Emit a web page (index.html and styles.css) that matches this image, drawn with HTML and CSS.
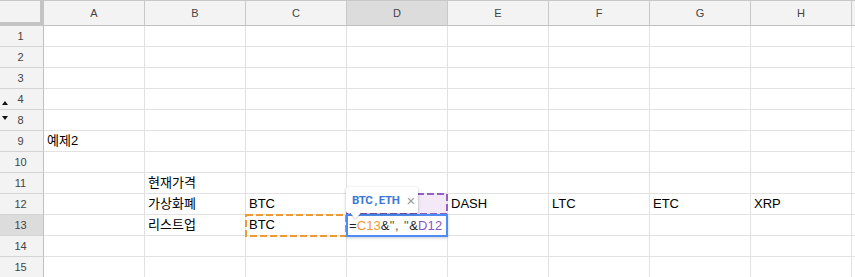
FILE: index.html
```html
<!DOCTYPE html>
<html lang="ko">
<head>
<meta charset="utf-8">
<link rel="stylesheet" href="styles.css">
</head>
<body>
<div class="sheet">
  <div class="row head">
    <div class="corner"></div>
    <div class="ch">A</div><div class="ch">B</div><div class="ch">C</div><div class="ch sel">D</div><div class="ch">E</div><div class="ch">F</div><div class="ch">G</div><div class="ch">H</div><div class="ch"></div>
  </div>
  <div class="row"><div class="rh">1</div><div class="c"></div><div class="c"></div><div class="c"></div><div class="c"></div><div class="c"></div><div class="c"></div><div class="c"></div><div class="c"></div><div class="c"></div></div>
  <div class="row"><div class="rh">2</div><div class="c"></div><div class="c"></div><div class="c"></div><div class="c"></div><div class="c"></div><div class="c"></div><div class="c"></div><div class="c"></div><div class="c"></div></div>
  <div class="row"><div class="rh">3</div><div class="c"></div><div class="c"></div><div class="c"></div><div class="c"></div><div class="c"></div><div class="c"></div><div class="c"></div><div class="c"></div><div class="c"></div></div>
  <div class="row"><div class="rh"><span class="arrow-up"></span>4</div><div class="c"></div><div class="c"></div><div class="c"></div><div class="c"></div><div class="c"></div><div class="c"></div><div class="c"></div><div class="c"></div><div class="c"></div></div>
  <div class="row"><div class="rh"><span class="arrow-down"></span>8</div><div class="c"></div><div class="c"></div><div class="c"></div><div class="c"></div><div class="c"></div><div class="c"></div><div class="c"></div><div class="c"></div><div class="c"></div></div>
  <div class="row"><div class="rh">9</div><div class="c">예제2</div><div class="c"></div><div class="c"></div><div class="c"></div><div class="c"></div><div class="c"></div><div class="c"></div><div class="c"></div><div class="c"></div></div>
  <div class="row"><div class="rh">10</div><div class="c"></div><div class="c"></div><div class="c"></div><div class="c"></div><div class="c"></div><div class="c"></div><div class="c"></div><div class="c"></div><div class="c"></div></div>
  <div class="row"><div class="rh">11</div><div class="c"></div><div class="c">현재가격</div><div class="c"></div><div class="c"></div><div class="c"></div><div class="c"></div><div class="c"></div><div class="c"></div><div class="c"></div></div>
  <div class="row"><div class="rh">12</div><div class="c"></div><div class="c">가상화폐</div><div class="c">BTC</div>
    <div class="c ref">
      <svg class="dash dash-purple" width="102" height="22" viewBox="0 0 102 22"><rect x="1" y="1" width="100" height="20" fill="#f3e9f9" stroke="#9360c4" stroke-width="2" stroke-dasharray="7 3"/></svg>
      <div class="tip"><span class="tip-text">BTC , ETH</span><span class="tip-x">×</span></div>
    </div>
    <div class="c">DASH</div><div class="c">LTC</div><div class="c">ETC</div><div class="c">XRP</div><div class="c"></div></div>
  <div class="row"><div class="rh sel">13</div><div class="c"></div><div class="c">리스트업</div>
    <div class="c ref">
      <svg class="dash dash-orange" width="102" height="23" viewBox="0 0 102 23"><rect x="1" y="1" width="100" height="21" fill="none" stroke="#ee9a33" stroke-width="2" stroke-dasharray="7 3"/></svg>
      <span class="val">BTC</span>
    </div>
    <div class="c ref">
      <div class="editor"><span class="f-op">=</span><span class="f-c13">C13</span><span class="f-op">&amp;</span><span class="f-str">", "</span><span class="f-op">&amp;</span><span class="f-d12">D12</span></div>
    </div>
    <div class="c"></div><div class="c"></div><div class="c"></div><div class="c"></div><div class="c"></div></div>
  <div class="row"><div class="rh">14</div><div class="c"></div><div class="c"></div><div class="c"></div><div class="c"></div><div class="c"></div><div class="c"></div><div class="c"></div><div class="c"></div><div class="c"></div></div>
  <div class="row"><div class="rh">15</div><div class="c"></div><div class="c"></div><div class="c"></div><div class="c"></div><div class="c"></div><div class="c"></div><div class="c"></div><div class="c"></div><div class="c"></div></div>
</div>
</body>
</html>
```
FILE: styles.css
```css
* { box-sizing: border-box; }
html, body { margin: 0; padding: 0; }
body {
  overflow: hidden;
  background: #fff;
  font-family: "Liberation Sans", Arial, "Noto Sans CJK KR", sans-serif;
  color: #000;
}
.sheet { width: 953px; }
.row {
  display: grid;
  grid-template-columns: 44px repeat(9, 101px);
  height: 21px;
}
.row.head { height: 26px; }
.corner {
  background: #f3f3f3;
  border-top: 1px solid #c8c8c8;
  border-right: 4px solid #c4c4c4;
  border-bottom: 4px solid #c4c4c4;
}
.ch {
  background: #f3f3f3;
  border-top: 1px solid #c8c8c8;
  border-right: 1px solid #c8c8c8;
  border-bottom: 1px solid #c0c0c0;
  display: flex;
  align-items: center;
  justify-content: center;
  font-size: 11px;
  color: #444;
}
.ch.sel, .rh.sel { background: #dcdcdc; }
.rh {
  position: relative;
  background: #f3f3f3;
  border-right: 1px solid #c0c0c0;
  border-bottom: 1px solid #d4d4d4;
  display: flex;
  align-items: center;
  justify-content: center;
  font-size: 11px;
  color: #444;
  padding-right: 2px;
}
.c {
  border-right: 1px solid #e2e2e2;
  border-bottom: 1px solid #e2e2e2;
  display: flex;
  align-items: flex-end;
  padding: 0 3px 2px 3px;
  font-size: 13px;
  line-height: 16px;
  white-space: nowrap;
}
.c.ref { position: relative; }
.val { position: relative; z-index: 2; }
.dash { position: absolute; left: -1px; top: -1px; z-index: 1; }
.arrow-up {
  position: absolute;
  left: 2px;
  top: 12px;
  border-left: 3px solid transparent;
  border-right: 3px solid transparent;
  border-bottom: 4px solid #111;
}
.arrow-down {
  position: absolute;
  left: 2px;
  top: 6px;
  border-left: 3px solid transparent;
  border-right: 3px solid transparent;
  border-top: 4px solid #111;
}
.tip {
  position: absolute;
  left: -1px;
  top: -7px;
  width: 72px;
  height: 26px;
  background: #fff;
  border-radius: 2px;
  box-shadow: 0 1px 3px rgba(0,0,0,0.3);
  z-index: 6;
  display: flex;
  align-items: center;
  padding-left: 6px;
  gap: 7px;
}
.tip::after {
  content: "";
  position: absolute;
  left: 6px;
  bottom: -4px;
  width: 7px;
  height: 7px;
  background: #fff;
  transform: rotate(45deg);
  box-shadow: 1px 1px 1px rgba(0,0,0,0.15);
}
.tip-text {
  font-family: Roboto, "Liberation Sans", sans-serif;
  font-weight: 700;
  font-size: 11.5px;
  letter-spacing: -0.4px;
  word-spacing: -0.5px;
  color: #3d78d6;
}
.tip-x {
  font-family: "Liberation Sans", sans-serif;
  font-size: 15px;
  color: #9a9a9a;
  line-height: 1;
}
.editor {
  position: absolute;
  left: -1px;
  top: -1px;
  width: 102px;
  height: 23px;
  border: 2px solid #4d8cf4;
  background: #fff;
  z-index: 4;
  display: flex;
  align-items: center;
  padding-left: 1px;
  font-size: 13px;
  letter-spacing: 0.1px;
  box-shadow: 0 1px 3px rgba(0,0,0,0.2);
}
.f-op { color: #222; }
.f-c13 { color: #ee9a33; }
.f-str { color: #2f6b3a; letter-spacing: 0.8px; }
.f-d12 { color: #8a58bd; }
```
